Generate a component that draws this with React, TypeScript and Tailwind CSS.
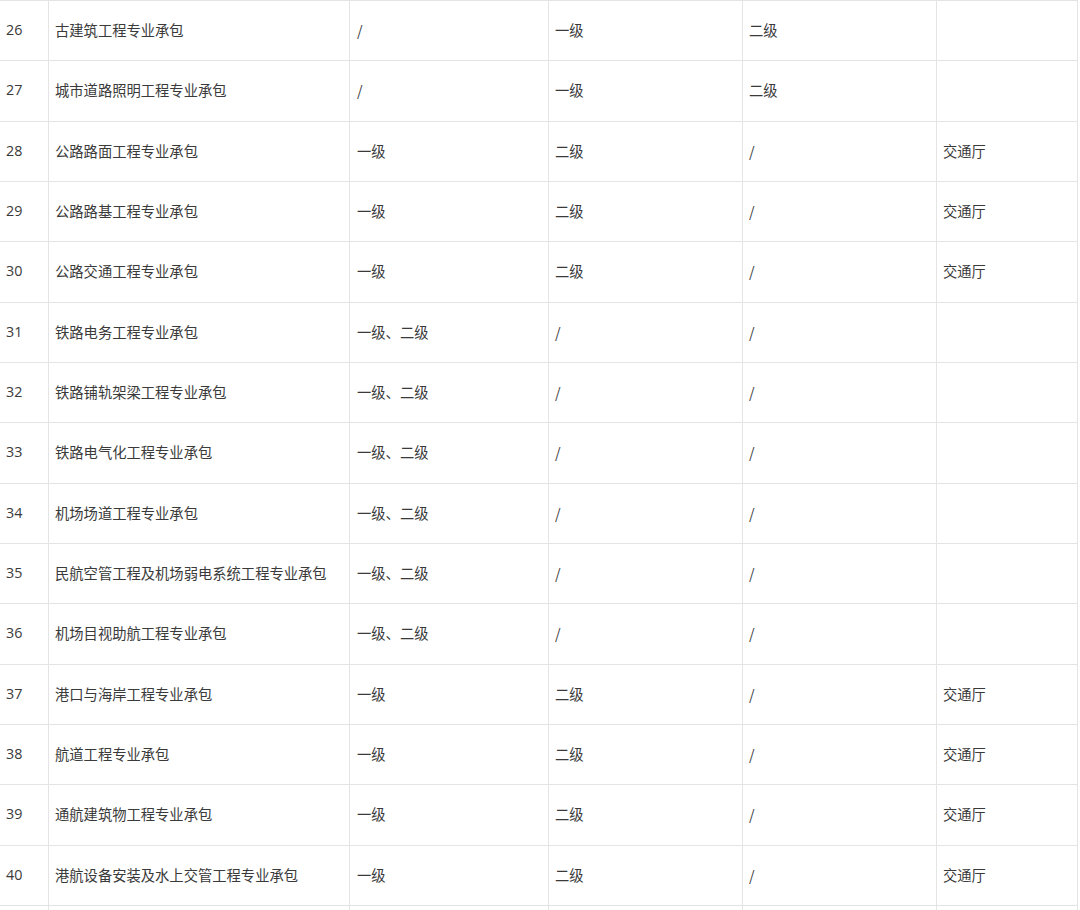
import React from "react";

const rows: [string, string, string, string, string, string][] = [
  ["26", "古建筑工程专业承包", "/", "一级", "二级", ""],
  ["27", "城市道路照明工程专业承包", "/", "一级", "二级", ""],
  ["28", "公路路面工程专业承包", "一级", "二级", "/", "交通厅"],
  ["29", "公路路基工程专业承包", "一级", "二级", "/", "交通厅"],
  ["30", "公路交通工程专业承包", "一级", "二级", "/", "交通厅"],
  ["31", "铁路电务工程专业承包", "一级、二级", "/", "/", ""],
  ["32", "铁路铺轨架梁工程专业承包", "一级、二级", "/", "/", ""],
  ["33", "铁路电气化工程专业承包", "一级、二级", "/", "/", ""],
  ["34", "机场场道工程专业承包", "一级、二级", "/", "/", ""],
  ["35", "民航空管工程及机场弱电系统工程专业承包", "一级、二级", "/", "/", ""],
  ["36", "机场目视助航工程专业承包", "一级、二级", "/", "/", ""],
  ["37", "港口与海岸工程专业承包", "一级", "二级", "/", "交通厅"],
  ["38", "航道工程专业承包", "一级", "二级", "/", "交通厅"],
  ["39", "通航建筑物工程专业承包", "一级", "二级", "/", "交通厅"],
  ["40", "港航设备安装及水上交管工程专业承包", "一级", "二级", "/", "交通厅"],
  ["", "", "", "", "", ""],
];

const widths = ["w-[49px]", "w-[301px]", "w-[199px]", "w-[194px]", "w-[194px]", "w-[141px]"];

export default function App() {
  return (
    <div
      className="w-[1080px] h-[910px] overflow-hidden bg-white text-[#3a3a3a] text-[14.3px]"
      style={{ fontFamily: '"Noto Sans CJK SC", sans-serif' }}
    >
      <div className="w-[1078px] border-t border-[#e4e4e4]">
        {rows.map((r, i) => (
          <div key={i} className="flex h-[60.35px] border-b border-[#e4e4e4]">
            {r.map((c, j) => (
              <div
                key={j}
                className={`${widths[j]} shrink-0 border-r border-[#e4e4e4] flex items-center pb-[2px] ${
                  j === 2 ? "pl-[7px]" : "pl-[6px]"
                }`}
              >
                <span
                  className={j === 0 ? "font-medium" : ""}
                  style={{ fontFamily: j === 0 ? '"Open Sans", "Noto Sans", sans-serif' : '"Noto Sans CJK SC", sans-serif' }}
                >
                  {c}
                </span>
              </div>
            ))}
          </div>
        ))}
      </div>
    </div>
  );
}
